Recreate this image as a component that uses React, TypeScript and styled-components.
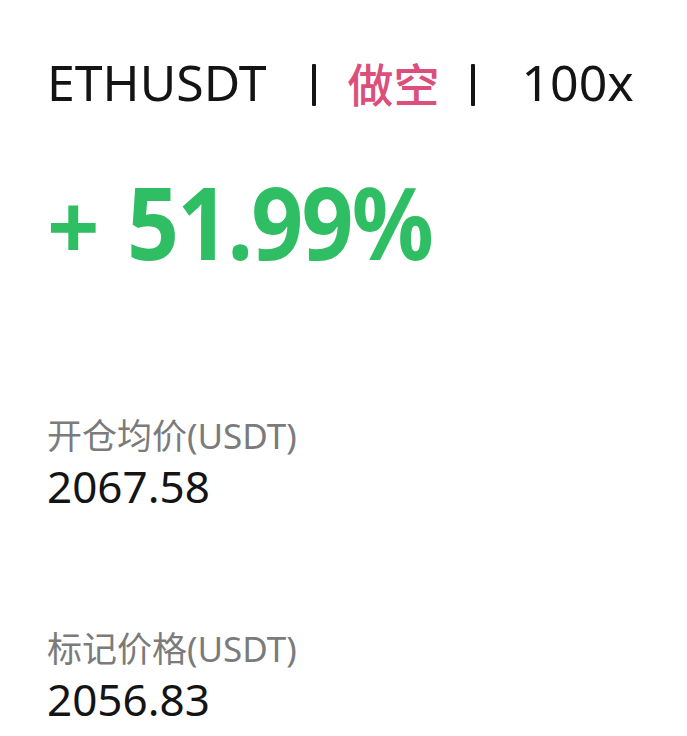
import styled, { createGlobalStyle } from 'styled-components';

const GlobalStyle = createGlobalStyle`
  html, body {
    margin: 0;
    padding: 0;
    background: #ffffff;
  }
  body {
    font-family: 'Noto Sans', 'Noto Sans CJK SC', sans-serif;
  }
`;

const Page = styled.div`
  width: 687px;
  height: 736px;
  box-sizing: border-box;
  padding: 52px 0 0 47px;
  background: #ffffff;
  color: #141414;
  overflow: hidden;
`;

const Header = styled.div`
  display: flex;
  align-items: center;
  height: 60px;
  font-size: 50px;
  line-height: 60px;
  font-weight: 400;
`;

const Symbol = styled.span``;

const Side = styled.span`
  color: #dd4f7b;
  font-family: 'Noto Sans CJK SC', sans-serif;
  font-weight: 500;
  font-size: 46px;
`;

const Divider = styled.span<{ $before: number; $after: number }>`
  align-self: flex-start;
  display: inline-block;
  width: 4px;
  height: 42px;
  margin: 12px ${(p) => p.$after}px 0 ${(p) => p.$before}px;
  background: #141414;
  border-radius: 1px;
`;

const Leverage = styled.span``;

const Pnl = styled.div`
  margin-top: 54px;
  height: 110px;
  display: flex;
  align-items: baseline;
  font-size: 100px;
  line-height: 110px;
  font-weight: 700;
  color: #2fbe63;
`;

const Sign = styled.span`
  font-size: 92px;
  margin-right: 27px;
`;

const Percent = styled.span`
  display: inline-block;
  letter-spacing: -2px;
  transform: scaleX(0.91);
  transform-origin: left center;
`;

const Field = styled.div<{ $gap: number }>`
  margin-top: ${(p) => p.$gap}px;
  display: flex;
  flex-direction: column;
  gap: 4px;
`;

const Label = styled.div`
  font-size: 35px;
  line-height: 40px;
  color: #7b7b7b;
`;

const Value = styled.div`
  font-size: 44px;
  line-height: 52px;
  color: #141414;
`;

export default function App() {
  return (
    <>
      <GlobalStyle />
      <Page>
        <Header>
          <Symbol>ETHUSDT</Symbol>
          <Divider $before={46} $after={31} />
          <Side>做空</Side>
          <Divider $before={32} $after={46} />
          <Leverage>100x</Leverage>
        </Header>
        <Pnl>
          <Sign>+</Sign>
          <Percent>51.99%</Percent>
        </Pnl>
        <Field $gap={140}>
          <Label>开仓均价(USDT)</Label>
          <Value>2067.58</Value>
        </Field>
        <Field $gap={117}>
          <Label>标记价格(USDT)</Label>
          <Value>2056.83</Value>
        </Field>
      </Page>
    </>
  );
}
